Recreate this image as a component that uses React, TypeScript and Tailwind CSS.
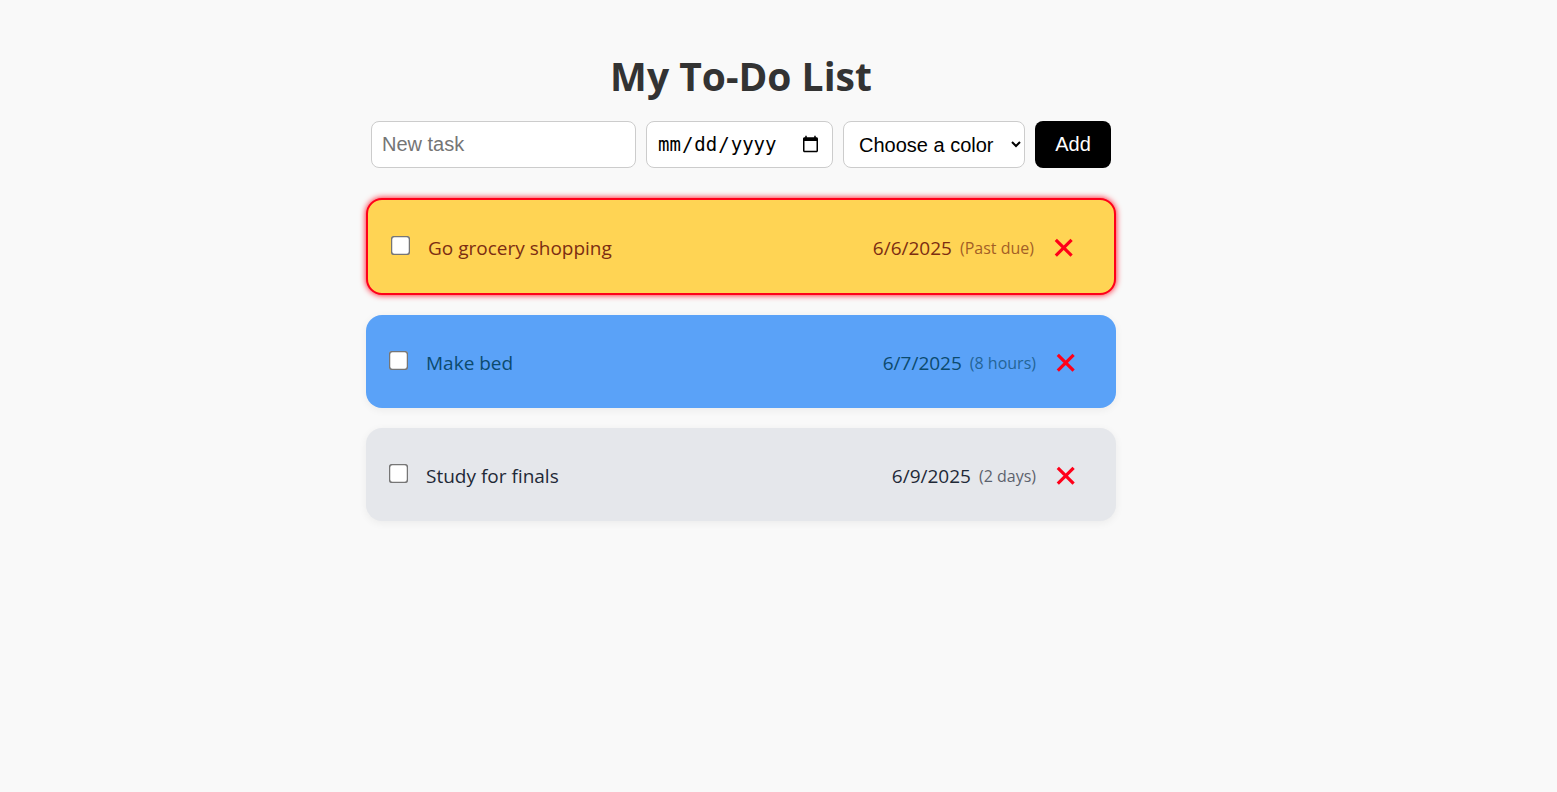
import { useState, type FormEvent } from "react";
import clsx from "clsx";

type Task = {
  id: number;
  name: string;
  date: string;
  remaining: string;
  tone: string;
  overdue?: boolean;
};

const initialTasks: Task[] = [
  {
    id: 1,
    name: "Go grocery shopping",
    date: "6/6/2025",
    remaining: "(Past due)",
    tone: "bg-[#ffd454] text-[#7c2d12]",
    overdue: true,
  },
  {
    id: 2,
    name: "Make bed",
    date: "6/7/2025",
    remaining: "(8 hours)",
    tone: "bg-[#5aa2f8] text-[#0c4a6e]",
  },
  {
    id: 3,
    name: "Study for finals",
    date: "6/9/2025",
    remaining: "(2 days)",
    tone: "bg-[#e5e7eb] text-[#1f2937]",
  },
];

const colorTones: Record<string, string> = {
  yellow: "bg-[#ffd454] text-[#7c2d12]",
  blue: "bg-[#5aa2f8] text-[#0c4a6e]",
  gray: "bg-[#e5e7eb] text-[#1f2937]",
};

const fieldClass = "h-[47px] rounded-lg border border-[#cccccc] bg-white";

function TaskCard({ task, onDelete }: { task: Task; onDelete: () => void }) {
  return (
    <li
      className={clsx(
        "flex items-center rounded-2xl pr-10 pl-[26px] pt-9 pb-8",
        task.tone,
        task.overdue
          ? "border-2 border-[#ff0019] shadow-[0_0_6px_#ff0019]"
          : "shadow-[0_2px_8px_rgba(0,0,0,0.06)]",
      )}
    >
      <input
        id={`task-${task.id}`}
        type="checkbox"
        className="mr-[21px] mb-1.5 size-[13px] shrink-0 scale-150"
      />
      <label htmlFor={`task-${task.id}`} className="min-w-0 flex-1 text-[19px] leading-[25px]">
        {task.name}
      </label>
      <span className="text-[19px] leading-[25px]">{task.date}</span>
      <span className="ml-2 text-[16px] leading-[25px] opacity-70">{task.remaining}</span>
      <button
        type="button"
        aria-label={`Delete ${task.name}`}
        onClick={onDelete}
        className="mb-0.5 ml-5 flex size-5 items-center justify-center text-[#ff0019]"
      >
        <svg viewBox="0 0 20 20" className="size-5" fill="none" stroke="currentColor" strokeWidth="3.2">
          <path d="M1.8 1.8 17.6 17.6M17.6 1.8 1.8 17.6" />
        </svg>
      </button>
    </li>
  );
}

export default function App() {
  const [tasks, setTasks] = useState(initialTasks);
  const [name, setName] = useState("");
  const [date, setDate] = useState("");
  const [color, setColor] = useState("");

  const addTask = (event: FormEvent) => {
    event.preventDefault();
    if (!name.trim()) return;
    setTasks([
      ...tasks,
      {
        id: Date.now(),
        name,
        date: date ? new Date(`${date}T00:00`).toLocaleDateString("en-US") : "",
        remaining: "",
        tone: colorTones[color] ?? colorTones.gray,
      },
    ]);
    setName("");
    setDate("");
    setColor("");
  };

  return (
    <div className="min-h-screen bg-[#f9f9f9] pr-[75px] font-['Open_Sans',sans-serif]">
      <main className="mx-auto max-w-[750px] pt-[49px]">
        <h1 className="text-center text-[39px] leading-[54px] font-bold text-[#333333]">
          My To-Do List
        </h1>
        <form
          onSubmit={addTask}
          className="mt-[18px] flex gap-2.5 px-[5px] font-['Liberation_Sans',sans-serif] text-[20px]"
        >
          <input
            type="text"
            aria-label="New task"
            placeholder="New task"
            value={name}
            onChange={(e) => setName(e.target.value)}
            className={clsx(fieldClass, "min-w-0 flex-1 px-2.5 placeholder:text-[#757575]")}
          />
          <input
            type="date"
            aria-label="Due date"
            value={date}
            onChange={(e) => setDate(e.target.value)}
            className={clsx(
              fieldClass,
              "w-[187px] px-2.5 font-['DejaVu_Sans_Mono',monospace] text-[19px] text-black",
            )}
          />
          <select
            aria-label="Color"
            value={color}
            onChange={(e) => setColor(e.target.value)}
            className={clsx(fieldClass, "w-[182px] pl-[11px] text-black")}
          >
            <option value="">Choose a color</option>
            <option value="yellow">Yellow</option>
            <option value="blue">Blue</option>
            <option value="gray">Gray</option>
          </select>
          <button type="submit" className="h-[47px] w-[76px] rounded-lg bg-black pb-0.5 text-white">
            Add
          </button>
        </form>
        <ul className="mt-[30px] flex flex-col gap-5">
          {tasks.map((task) => (
            <TaskCard
              key={task.id}
              task={task}
              onDelete={() => setTasks(tasks.filter((t) => t.id !== task.id))}
            />
          ))}
        </ul>
      </main>
    </div>
  );
}
